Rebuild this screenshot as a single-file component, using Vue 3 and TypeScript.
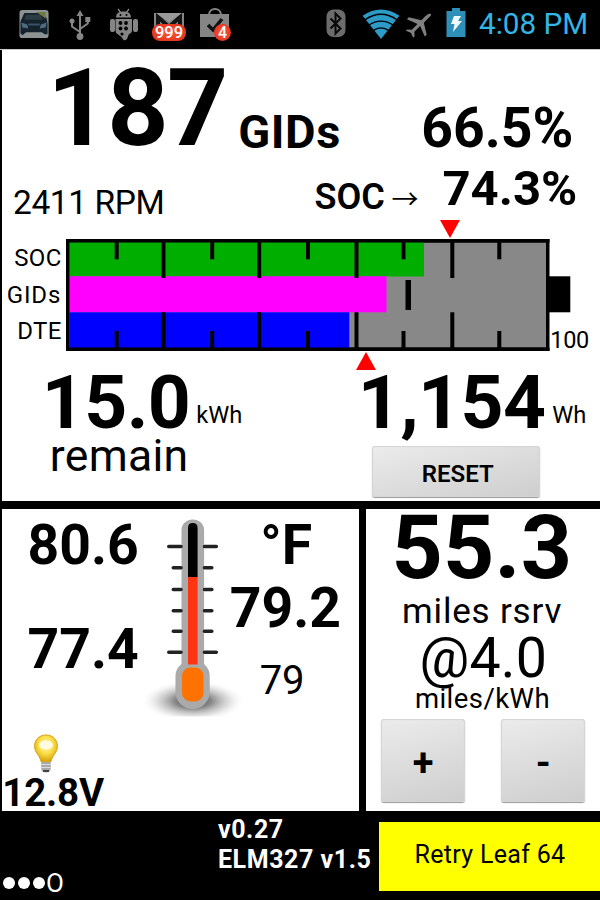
<script setup lang="ts">
interface Bar { y: number; h: number; end: number; color: string }
interface Tick { x: number; long: boolean }

const bars: Bar[] = [
  { y: 3, h: 34.5, end: 358, color: '#00ae00' },
  { y: 37.3, h: 36, end: 320.5, color: '#ff00ff' },
  { y: 73.3, h: 36, end: 283.3, color: '#0000ff' },
]
const ticks: Tick[] = [50.7, 97.5, 146.2, 193.2, 242, 290.5, 337.5, 386.3, 433.3].map(
  (x, i) => ({ x, long: i % 2 === 1 }),
)
const marks = [
  { y: 546.5, long: true }, { y: 567.8, long: false }, { y: 589.5, long: false },
  { y: 610.7, long: false }, { y: 631.2, long: false }, { y: 652.3, long: true },
]
</script>

<template>
  <div class="screen">
    <header class="status">
      <svg class="ic car" viewBox="0 0 32 32">
        <rect x="1" y="1" width="30" height="29" rx="3" fill="#8d9294" />
        <path d="M6 4h17l6 5 1 6v11h-3l-3-2H8l-4 3-2-2V13z" fill="#15222b" />
        <path d="M8 6h15l2 5H6z" fill="#2c3c42" />
        <path d="M18 3h10v7l-4-3z" fill="#6d7a42" />
        <path d="M3 14l6 2 1 4-6-1zM29 14l-6 2-1 4 6-1z" fill="#4e6c80" />
        <path d="M10 15h12v2H10z" fill="#36556a" />
        <path d="M7 29l3-4h12l3 4z" fill="#8d9294" />
      </svg>
      <svg class="ic usb" viewBox="0 0 22 32">
        <g fill="none" stroke="#858585" stroke-width="2">
          <path d="M11 5v22M11 23l-8-5.500v-6M11 20l7.800-5.500v-4" />
        </g>
        <path d="M11 1l3.500 6h-7z" fill="#858585" />
        <circle cx="11" cy="27.500" r="3.400" fill="#858585" />
        <circle cx="3" cy="12" r="2.500" fill="#858585" />
        <rect x="16.300" y="8" width="5" height="5" fill="#858585" />
      </svg>
      <svg class="ic robot" viewBox="0 0 30 34">
        <g fill="#858585">
          <path d="M7 9.500C7 5 10.500 3.500 14.500 3.500S22 5 22 9.500z" />
          <path d="M9 1l3 4M20 1l-3 4" stroke="#858585" stroke-width="1.300" />
          <rect x="1" y="11" width="5" height="13" rx="2" />
          <rect x="24" y="11" width="5" height="13" rx="2" />
          <path d="M6.500 11h16.500v11q0 3-3 4l-2 5q-2 2-3.500 1l-2-3-4-3q-2-1-2-4z" />
        </g>
        <g fill="#000">
          <circle cx="11.500" cy="7" r="1" /><circle cx="17.500" cy="7" r="1" />
          <circle cx="11.500" cy="15" r="1.900" /><circle cx="17" cy="15" r="1.900" />
          <circle cx="11.500" cy="20.500" r="1.900" /><circle cx="17" cy="20.500" r="1.900" />
          <circle cx="13" cy="26" r="1.600" />
        </g>
      </svg>
      <div class="badged mail">
        <svg viewBox="0 0 32 24">
          <rect x="1" y="1" width="30" height="23" fill="#858585" />
          <path d="M5 24V5l11 10L27 5v19" fill="none" stroke="#141414" stroke-width="4" />
          <path d="M3 1l13 9L29 1z" fill="#9a9a9a" />
        </svg>
        <span class="badge wide">999</span>
      </div>
      <div class="badged bag">
        <svg viewBox="0 0 32 30">
          <path d="M10 7c0-8 12-8 12 0" fill="none" stroke="#858585" stroke-width="2" />
          <rect x="1" y="6" width="29" height="23" fill="#858585" />
          <path d="M9 17l5 5 9-11" fill="none" stroke="#111" stroke-width="3.500" />
        </svg>
        <span class="badge round">4</span>
      </div>
      <svg class="ic bt" viewBox="0 0 20 30">
        <rect x=".5" y=".5" width="19" height="27.500" rx="7" fill="#6c6c6c" />
        <path d="M4.500 9.500l10 10-5 5V4.500l5 5L4.500 19.500" fill="none" stroke="#080808" stroke-width="2" />
      </svg>
      <svg class="ic wifi" viewBox="0 0 38 30">
        <path d="M0 6Q19-7 38 6L19 30z" fill="#2c9bc8" />
        <g fill="none" stroke="#000" stroke-width="1.500">
          <path d="M2 10.500q17-12 34 0M6 16q13-9 26 0M10.500 21.500q8.500-6 17 0" />
        </g>
      </svg>
      <svg class="ic plane" viewBox="0 0 28 26">
        <path d="M27 .5c-2-1-4 .5-6 2.500l-4 4L4 4 2 6l11 5-6 6-5-.500L1 18l5 2 2.500 5 1.500-1-.3-5 6-6L20.500 24l2-2L19.500 9.500l4.500-4.500c2-2 3.500-3 3-4.500z" fill="#808080" />
      </svg>
      <svg class="ic batt" viewBox="0 0 20 30">
        <path d="M6 0h8v3h5.500v26H.5V3H6z" fill="#2e8fb9" />
        <path d="M8 8h7l-3 5h4L7 24l1.500-8H5z" fill="#f1fbff" />
      </svg>
      <span class="clock">4:08 PM</span>
    </header>

    <main>
      <section class="panel energy">
        <div class="row-a">
          <span class="t gid-count">187</span>
          <span class="t gid-unit">GIDs</span>
          <span class="t gid-pct">66.5%</span>
        </div>
        <div class="row-b">
          <span class="t rpm">2411 RPM</span>
          <span class="t soc-name">SOC</span>
          <span class="t arrow">→</span>
          <span class="t soc-pct">74.3%</span>
        </div>
        <div class="strip top"><svg viewBox="0 0 20 18"><path d="M0 0h20L10 18z" fill="#f00" /></svg></div>
        <div class="gauge-row">
          <div class="gauge-labels"><span>SOC</span><span class="mid">GIDs</span><span>DTE</span></div>
          <svg class="gauge" viewBox="0 0 505 112">
            <rect x="0" y="0" width="483.500" height="112" fill="#000" />
            <rect x="3.700" y="3.500" width="476.300" height="105" fill="#888" />
            <rect v-for="b in bars" :key="b.color" x="3.700" :y="b.y" :width="b.end - 3.7" :height="b.h" :fill="b.color" />
            <rect x="0" y="0" width="483.500" height="3.500" />
            <rect x="0" y="108.500" width="483.500" height="3.500" />
            <g v-for="t in ticks" :key="t.x">
              <rect :x="t.x - 2" y="0" width="4" :height="t.long ? 39 : 20.3" />
              <rect :x="t.x - 2" :y="t.long ? 73.3 : 92" width="4" :height="t.long ? 37 : 18" />
            </g>
            <rect x="339.500" y="41" width="5.500" height="30" />
            <rect x="483" y="37.300" width="21.300" height="36" />
          </svg>
          <span class="t full">100</span>
        </div>
        <div class="strip bottom"><svg viewBox="0 0 20 18"><path d="M0 18h20L10 0z" fill="#f00" /></svg></div>
        <div class="row-c">
          <span class="t kwh">15.0</span>
          <span class="t kwh-unit">kWh</span>
          <span class="t wh">1,154</span>
          <span class="t wh-unit">Wh</span>
        </div>
        <div class="row-d">
          <span class="t remain">remain</span>
          <button class="btn reset">RESET</button>
        </div>
      </section>

      <div class="lower">
        <section class="panel temps">
          <div class="col-left">
            <span class="t temp">80.6</span>
            <span class="t temp second">77.4</span>
            <svg class="bulb" viewBox="0 0 26 41">
              <defs>
                <radialGradient id="glow" cx=".5" cy=".38" r=".62">
                  <stop offset="0" stop-color="#fff8c0" /><stop offset=".5" stop-color="#fbe04d" /><stop offset="1" stop-color="#d9a404" />
                </radialGradient>
              </defs>
              <path d="M13 2C5.500 2 1.500 7.500 1.500 13.500c0 5.500 5 8.500 6.500 15h10c1.500-6.500 6.500-9.500 6.500-15C24.500 7.500 20.500 2 13 2z" fill="url(#glow)" stroke="#d8a51a" stroke-width="1" />
              <ellipse cx="13" cy="12" rx="7" ry="4.500" fill="#fffbe0" />
              <path d="M8.200 29h9.600v7q-1 3.500-4.800 3.500T8.200 36z" fill="#a9a9a9" />
              <path d="M8.200 31.500h9.600M8.200 34.500h9.600" stroke="#ddd" />
              <path d="M10 38h6" stroke="#444" stroke-width="2" />
            </svg>
            <span class="t volts">12.8V</span>
          </div>
          <svg class="thermo" viewBox="140 508 105 214">
            <defs>
              <radialGradient id="shade">
                <stop offset="0" stop-color="#333" stop-opacity=".95" /><stop offset=".35" stop-color="#555" stop-opacity=".7" />
                <stop offset=".7" stop-color="#999" stop-opacity=".3" /><stop offset="1" stop-color="#fff" stop-opacity="0" />
              </radialGradient>
              <clipPath id="floor"><rect x="140" y="670" width="105" height="46.500" /></clipPath>
            </defs>
            <ellipse cx="193" cy="701" rx="52" ry="21" fill="url(#shade)" clip-path="url(#floor)" />
            <path d="M181.500 530a11.300 10.500 0 0 1 22.600 0v134q5.600 5 5.600 12v16a17 17 0 0 1-34.200 0v-16q0-7 6-12z" fill="#aaa" />
            <path d="M188 577v-49q0-5 4.800-5t4.800 5v49z" fill="#000" />
            <rect x="188" y="577" width="9.600" height="87.500" fill="#ff3413" />
            <rect x="182" y="667.500" width="21.500" height="34" rx="8.500" fill="#ff7200" />
            <g stroke="#222" stroke-width="3.600" stroke-linecap="round">
              <path v-for="m in marks" :key="m.y" :d="`M${m.long ? 168.800 : 173.300} ${m.y}H181M204.500 ${m.y}H${m.long ? 216.300 : 211.800}`" />
            </g>
          </svg>
          <div class="col-right">
            <span class="t temp deg">°F</span>
            <span class="t temp avg">79.2</span>
            <span class="t small">79</span>
          </div>
        </section>

        <section class="panel range">
          <span class="t miles">55.3</span>
          <span class="t rsrv">miles rsrv</span>
          <span class="t rate">@4.0</span>
          <span class="t rate-unit">miles/kWh</span>
          <div class="steppers">
            <button class="btn step">+</button>
            <button class="btn step">-</button>
          </div>
        </section>
      </div>
    </main>

    <footer class="foot">
      <div class="signal">
        <i></i><i></i><i></i><span>O</span>
      </div>
      <div class="version"><span>v0.27</span><span>ELM327 v1.5</span></div>
      <button class="retry">Retry Leaf 64</button>
    </footer>
  </div>
</template>

<style>
body { background: #000; }
</style>

<style scoped>
.screen { width: 600px; height: 900px; overflow: hidden; background: #000; color: #000; font-family: Roboto, "Liberation Sans", sans-serif; display: flex; flex-direction: column; }
svg { display: block; overflow: visible; }
button { font-family: inherit; border: 0; padding: 0; margin: 0; }
.t { display: block; flex: none; line-height: 1; white-space: nowrap; }

.status { height: 49px; flex: none; display: flex; align-items: flex-start; border-bottom: 1px solid #c9c9c9; box-sizing: content-box; }
.ic { flex: none; }
.car { width: 32px; height: 31px; margin: 9px 0 0 18px; }
.usb { width: 22px; height: 32px; margin: 9px 0 0 19px; }
.robot { width: 30px; height: 34px; margin: 8px 0 0 18px; }
.badged { flex: none; position: relative; }
.mail { width: 32px; height: 24px; margin: 12px 0 0 14px; }
.bag { width: 32px; height: 30px; margin: 8px 0 0 14px; }
.badge { position: absolute; color: #fff; background: radial-gradient(#fb5a3d, #dd2a14); font-weight: 500; text-align: center; }
.wide { left: -1px; top: 12px; width: 34px; height: 17px; border-radius: 8px; font-size: 16.500px; line-height: 18px; }
.round { left: 15px; top: 16px; width: 17px; height: 17px; border-radius: 9px; font-size: 16px; line-height: 17px; }
.bt { width: 20px; height: 30px; margin: 9px 0 0 95px; }
.wifi { width: 38px; height: 29px; margin: 10px 0 0 16px; }
.plane { width: 27px; height: 26px; margin: 13px 0 0 5px; }
.batt { width: 20px; height: 30px; margin: 8px 0 0 14px; }
.clock { flex: none; margin: 9px 0 0 13px; font-size: 29.700px; line-height: 1; color: #33b5e5; white-space: nowrap; }

main { flex: none; width: 598px; margin-left: 2.300px; display: flex; flex-direction: column; gap: 7.500px; }
.panel { background: #fff; }
.energy { height: 451px; }
.row-a, .row-b, .row-c, .row-d, .gauge-row { display: flex; align-items: flex-start; }
.row-a { height: 114px; }
.gid-count { width: 191px; margin: 4.500px 0 0 45px; font-size: 107px; font-weight: 700; letter-spacing: -1.500px; }
.gid-unit { width: 183px; margin-top: 58.200px; font-size: 47px; font-weight: 700; letter-spacing: .5px; }
.gid-pct { margin-top: 50.600px; font-size: 55.300px; font-weight: 700; }
.row-b { height: 56px; }
.rpm { width: 301.500px; margin: 22px 0 0 10.700px; font-size: 33.500px; letter-spacing: -.4px; }
.soc-name { width: 77px; margin-top: 14.500px; font-size: 36px; font-weight: 600; }
.arrow { width: 50px; margin-top: 20px; font-family: "Noto Sans CJK JP", sans-serif; font-size: 28px; }
.soc-pct { font-size: 49px; font-weight: 700; margin-left: 1px; }
.arrow { font-size: 27px; }
.strip { height: 19px; }
.strip svg { width: 20px; height: 18px; }
.strip.top svg { margin-left: 438px; }
.strip.bottom { height: 20px; padding-top: 1px; box-sizing: border-box; }
.strip.bottom svg { margin-left: 353.500px; }
.gauge-row { height: 112px; }
.gauge-labels { width: 60px; flex: none; display: flex; flex-direction: column; align-items: flex-end; font-size: 24px; letter-spacing: .4px; padding-top: 1px; }
.gauge-labels span { line-height: 36.700px; margin-right: .5px; }
.gauge-labels .mid { margin-right: 1px; letter-spacing: .9px; }
.gauge { width: 505px; height: 112px; flex: none; margin-left: 4px; }
.full { margin: 90px 0 0 -21px; font-size: 23.500px; letter-spacing: -.3px; }
.row-c { height: 60px; }
.kwh, .wh { font-size: 75px; font-weight: 700; margin-top: -6.100px; letter-spacing: -.6px; }
.kwh { width: 154.500px; margin-left: 39.500px; }
.kwh-unit, .wh-unit { font-size: 23.700px; margin-top: 33px; }
.kwh-unit { width: 161.500px; }
.wh { width: 194.500px; }
.remain { width: 322.500px; margin: 2.500px 0 0 47.500px; font-size: 44.500px; letter-spacing: .3px; }
.btn { display: flex; align-items: center; justify-content: center; background: linear-gradient(165deg, #ececec, #dedede 45%, #cecece); border-radius: 3px; box-shadow: 0 1px 1px #999, inset 0 0 1px 1px #d4d4d4; color: #000; font-weight: 700; }
.reset { width: 168px; height: 51px; margin-top: 14.500px; font-size: 24px; font-weight: 600; padding: 6px 0 0 3px; box-sizing: border-box; }

.lower { display: flex; gap: 7.300px; height: 302px; }
.temps { width: 356.300px; display: flex; }
.col-left { width: 138px; flex: none; display: flex; flex-direction: column; }
.temp { font-size: 55.300px; font-weight: 700; margin-top: 9.800px; margin-left: 25.300px; }
.second { margin-top: 48.500px; }
.bulb { width: 26px; height: 41px; flex: none; margin: 55.400px 0 0 30.500px; }
.volts { font-size: 38.500px; font-weight: 700; margin-top: .5px; letter-spacing: -.2px; }
.thermo { width: 105px; height: 214px; flex: none; margin-right: -19px; margin-top: -.5px; }
.col-right { display: flex; flex-direction: column; }
.deg { margin-left: 34px; }
.avg { margin: 7px 0 0 3.500px; }
.small { margin: 25.300px 0 0 33.500px; font-size: 40px; letter-spacing: -.3px; }

.range { width: 234px; display: flex; flex-direction: column; align-items: flex-start; }
.miles { margin: -5.400px 0 0 25.500px; font-size: 89.500px; font-weight: 700; letter-spacing: .2px; }
.rsrv { margin: .9px 0 0 36.200px; font-size: 35px; letter-spacing: .8px; }
.rate { margin: 2.300px 0 0 53.500px; font-size: 55.500px; letter-spacing: .2px; }
.rate-unit { margin: -1.600px 0 0 49px; font-size: 27.500px; letter-spacing: .45px; }
.steppers { display: flex; gap: 36.500px; margin: 7px 0 0 15.500px; }
.step { width: 83.500px; height: 83px; font-size: 38px; padding-top: 4px; box-sizing: border-box; }

.foot { flex: 1; display: flex; align-items: flex-start; color: #fff; }
.signal { width: 216px; height: 24px; margin-top: 60.500px; display: flex; align-items: center; gap: 3px; padding-left: 2.700px; box-sizing: border-box; }
.signal i { width: 12px; height: 12px; border-radius: 50%; background: #fff; }
.signal span { font-size: 26px; line-height: 24px; margin-left: -1.700px; }
.version { width: 163px; flex: none; margin-top: 4px; display: flex; flex-direction: column; padding-left: 2px; box-sizing: border-box; font-weight: 700; font-size: 25px; letter-spacing: .55px; line-height: 30px; white-space: nowrap; }
.retry { width: 221px; height: 69px; margin-top: 11px; background: #ff0; color: #000; font-size: 25px; letter-spacing: .3px; padding: 0 0 4px 1px; white-space: nowrap; }
</style>
